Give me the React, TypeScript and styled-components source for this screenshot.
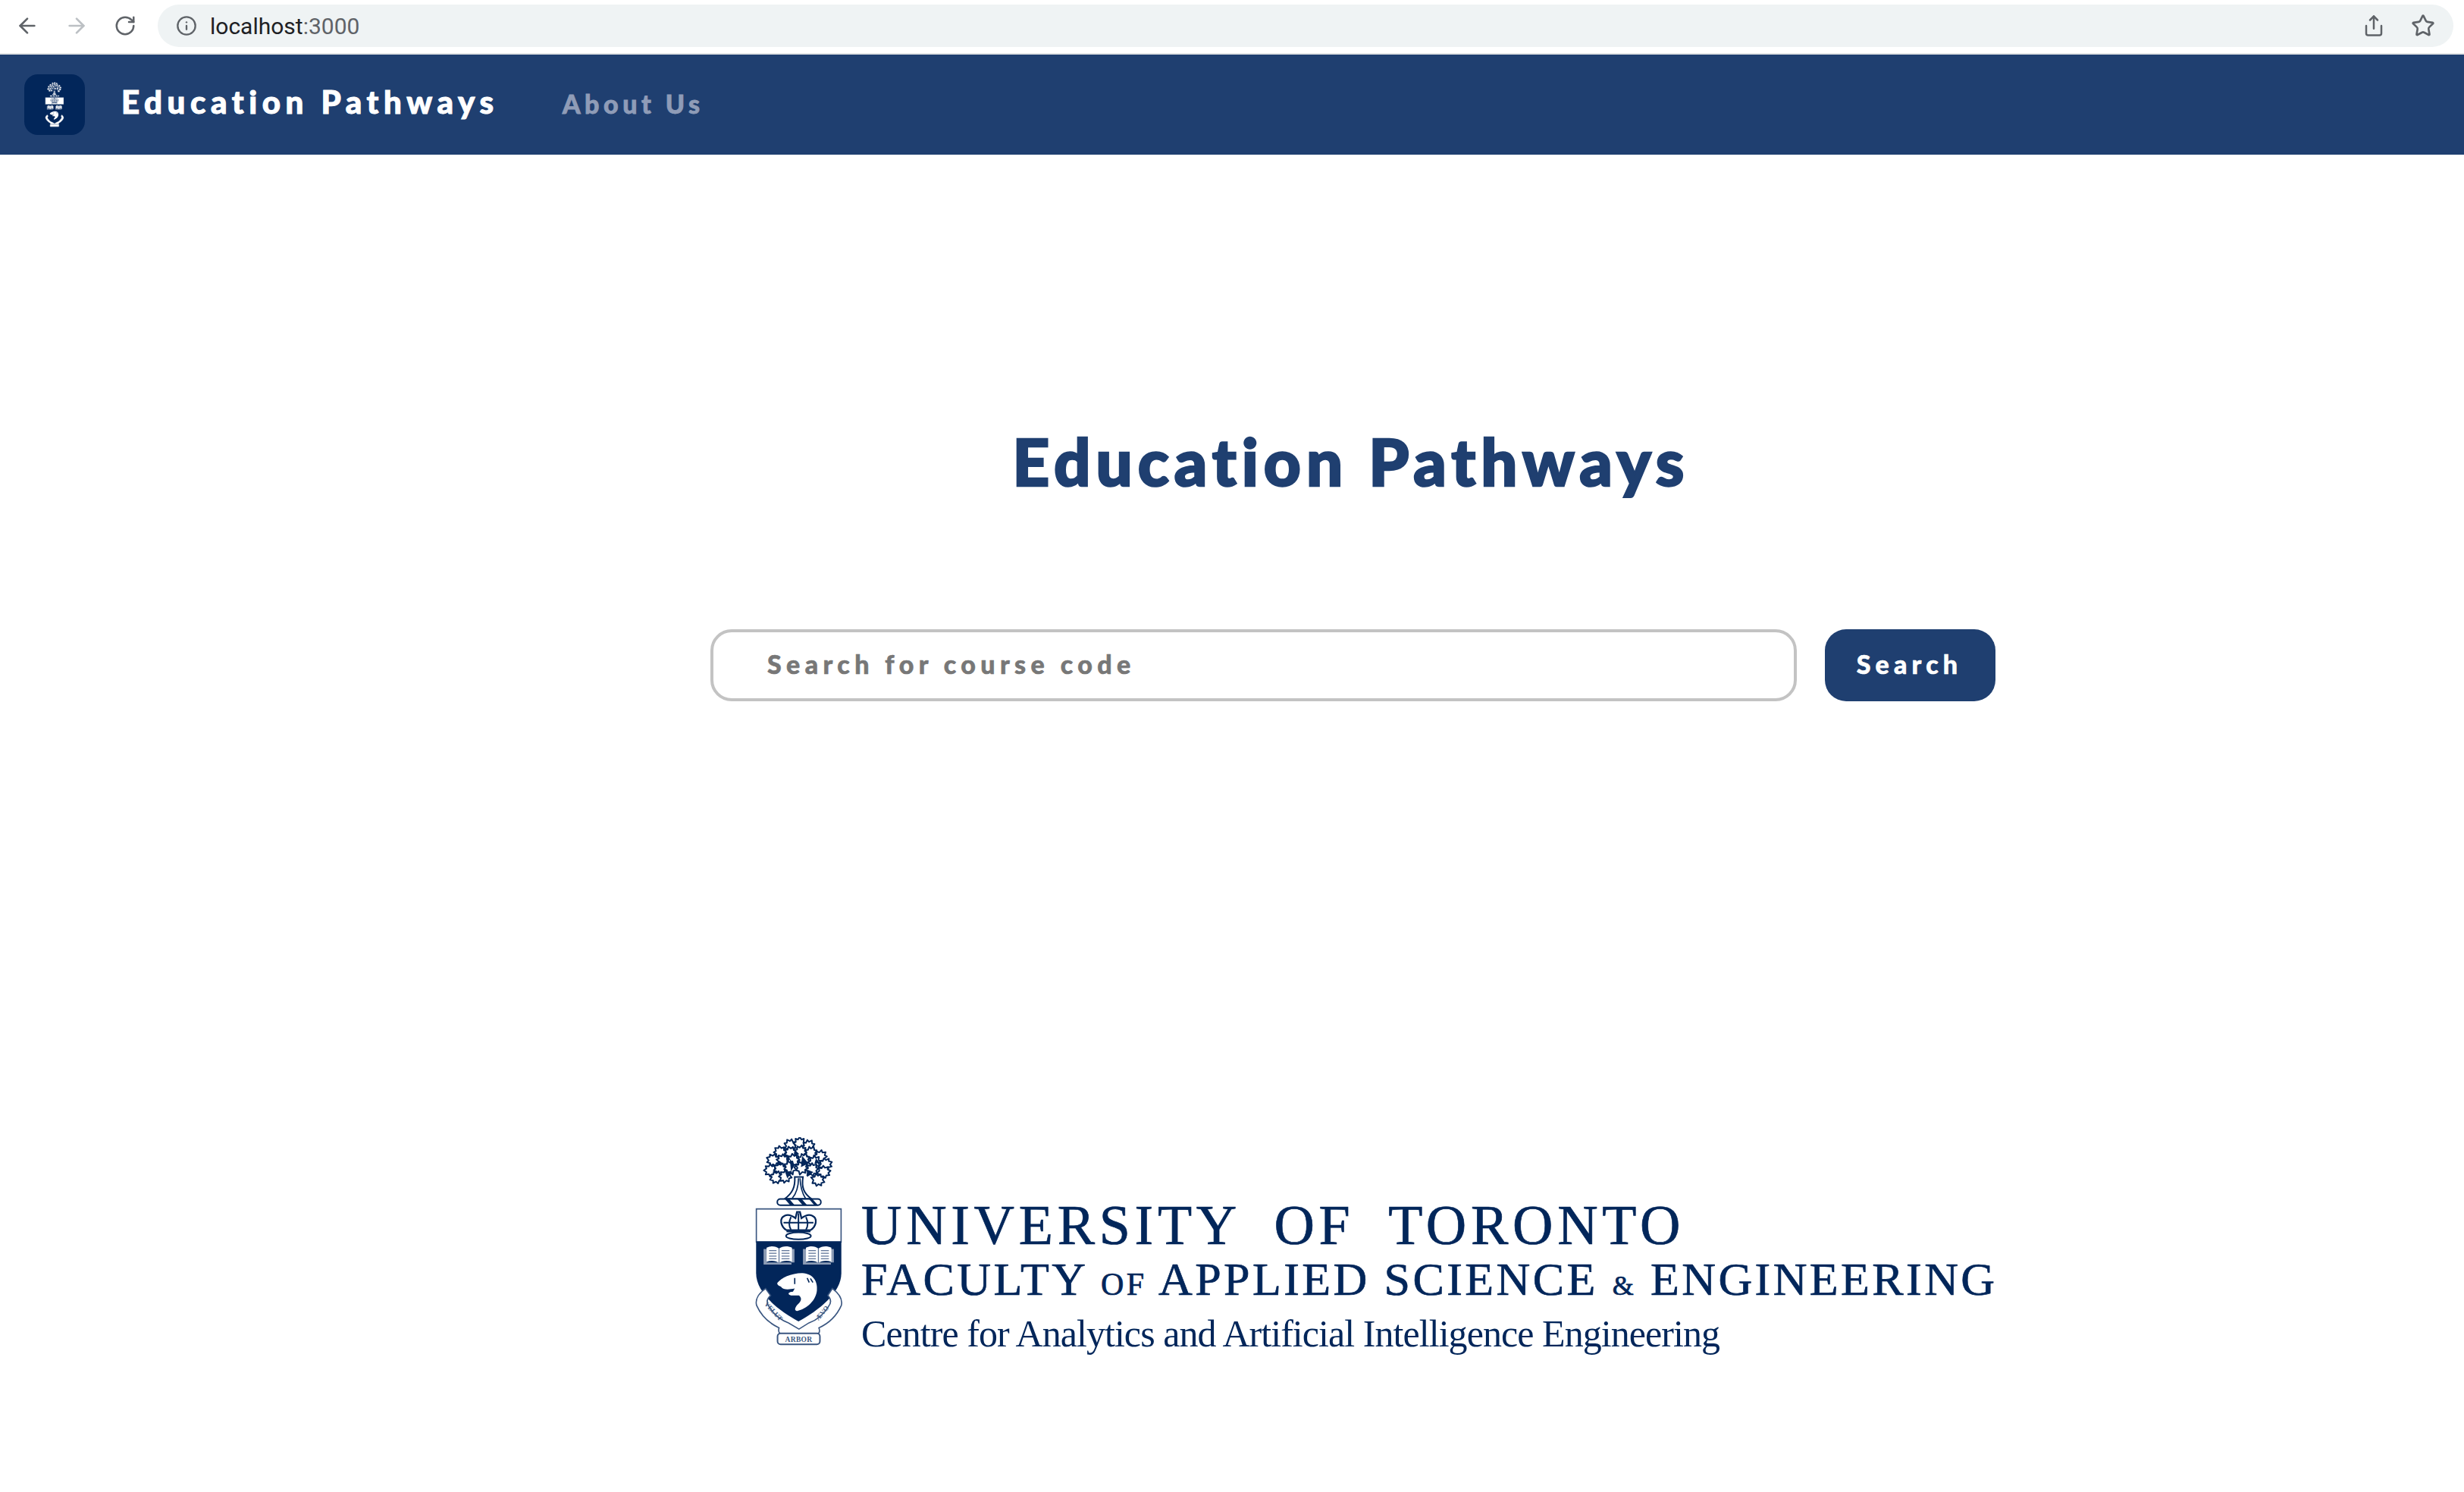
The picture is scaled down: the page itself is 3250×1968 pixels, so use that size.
import * as React from "react";
import styled, { createGlobalStyle } from "styled-components";
import { ArrowLeft, ArrowRight, Info, RotateCw, Share, Star } from "lucide-react";

const navy = "#1f3f70";
const ink = "#02265a";

const GlobalStyle = createGlobalStyle`
  html, body {
    margin: 0;
    padding: 0;
    background: #fff;
    font-family: "Lato", "Liberation Sans", sans-serif;
  }
`;

const Page = styled.div`
  width: 3250px;
  height: 1968px;
  display: flex;
  flex-direction: column;
  overflow: hidden;
  background: #fff;
`;

const BrowserBar = styled.div`
  height: 72px;
  flex: none;
  display: flex;
  align-items: center;
  padding: 0 14px 2px 20px;
  box-sizing: border-box;
  border-bottom: 2px solid #e2e4e6;
`;

const ToolIcon = styled.span<{ $muted?: boolean; $gap?: number }>`
  display: flex;
  margin-right: ${p => p.$gap ?? 33}px;
  color: ${p => (p.$muted ? "#bcc0c4" : "#5f6368")};
`;

const AddressBar = styled.div`
  flex: 1;
  height: 56px;
  border-radius: 28px;
  background: #eff3f4;
  display: flex;
  align-items: center;
  padding: 0 24px 0 24px;
`;

const Url = styled.span`
  flex: 1;
  margin-left: 17px;
  font-family: "Roboto", sans-serif;
  font-size: 30px;
  color: #202124;
`;

const UrlPort = styled.span`
  color: #5f6368;
`;

const Navbar = styled.nav`
  height: 132px;
  flex: none;
  display: flex;
  align-items: center;
  padding-left: 32px;
  background: ${navy};
`;

const LogoTile = styled.div`
  width: 80px;
  height: 80px;
  border-radius: 18px;
  background: ${ink};
  display: flex;
  align-items: center;
  justify-content: center;
  margin-right: 48px;
`;

const Brand = styled.a`
  font-size: 42px;
  font-weight: 900;
  letter-spacing: 6.6px;
  -webkit-text-stroke: 1px #fff;
  color: #fff;
  margin-right: 84px;
  position: relative;
  top: -4px;
`;

const NavLink = styled.a`
  font-size: 34px;
  font-weight: 900;
  letter-spacing: 5.5px;
  -webkit-text-stroke: 0.8px #8f9cb7;
  color: #8f9cb7;
  position: relative;
  top: -2px;
`;

const Main = styled.main`
  flex: 1;
  display: flex;
  flex-direction: column;
  padding-left: 937px;
`;

const Title = styled.h1`
  width: 1690px;
  margin: 352px 0 0;
  text-align: center;
  font-size: 85px;
  line-height: 104px;
  font-weight: 900;
  letter-spacing: 7px;
  -webkit-text-stroke: 2.5px ${navy};
  color: ${navy};
`;

const SearchRow = styled.form`
  display: flex;
  gap: 37px;
  margin-top: 170px;
`;

const SearchInput = styled.input`
  width: 1433px;
  height: 95px;
  box-sizing: border-box;
  border: 4px solid #c3c3c3;
  border-radius: 28px;
  padding: 0 0 4px 71px;
  background: #fff;
  outline: none;
  font-family: "Lato", sans-serif;
  font-size: 34px;
  font-weight: 900;
  letter-spacing: 6.4px;
  -webkit-text-stroke: 0.6px #777;
  color: #777;

  &::placeholder {
    color: #777;
    opacity: 1;
  }
`;

const SearchButton = styled.button`
  width: 225px;
  height: 95px;
  padding: 0 2px 4px 0;
  border: none;
  border-radius: 28px;
  background: ${navy};
  color: #fff;
  font-family: "Lato", sans-serif;
  font-size: 34px;
  font-weight: 900;
  letter-spacing: 6.2px;
  -webkit-text-stroke: 0.6px #fff;
`;

const Footer = styled.div`
  display: flex;
  align-items: flex-start;
  margin: 575px 0 0 57px;
`;

const FooterText = styled.div`
  display: flex;
  flex-direction: column;
  margin: 78px 0 0 22px;
  font-family: "Liberation Serif", serif;
  color: ${ink};
  white-space: nowrap;
`;

const FooterLine = styled.div<{ $size: number; $spacing: number; $height: number; $words?: number; $heavy?: boolean }>`
  font-size: ${p => p.$size}px;
  letter-spacing: ${p => p.$spacing}px;
  word-spacing: ${p => p.$words ?? 0}px;
  line-height: ${p => p.$height}px;
  -webkit-text-stroke: ${p => (p.$heavy ? `0.7px ${ink}` : "0")};
`;

const SmallWord = styled.span<{ $size: number }>`
  font-size: ${p => p.$size}px;
`;

// leaf clusters of the oak, in crest coordinates
const leaves: [number, number, number][] = [
  [190, 62, -30], [225, 55, 0], [258, 65, 30], [150, 88, -50], [190, 92, -20], [228, 88, 10],
  [268, 92, 25], [305, 105, 50], [122, 118, -70], [160, 122, -40], [200, 122, -10], [240, 120, 20],
  [282, 128, 40], [325, 135, 70], [112, 158, -90], [150, 155, -60], [188, 150, -20], [232, 150, 15],
  [272, 158, 40], [318, 165, 80], [135, 185, -110], [295, 195, 110], [170, 180, -130],
];

const Crest = ({ width, paper, text }: { width: number; paper: string; text: boolean }) => (
  <svg viewBox="40 25 365 840" width={width} height={(width * 840) / 365} style={{ flex: "none" }}>
    {/* tree */}
    {leaves.map(([x, y, r], i) => (
      <path
        key={i}
        transform={`translate(${x} ${y}) rotate(${r}) scale(1.2)`}
        d="M0-26 L6-17 L14-20 L13-9 L21-5 L13 2 L17 11 L6 11 L0 22 L-6 11 L-17 11 L-13 2 L-21-5 L-13-9 L-14-20 L-6-17Z"
        fill={paper}
        stroke={ink}
        strokeWidth="5"
        strokeLinejoin="round"
      />
    ))}
    <path d="M185 112l20 25-15 25zM235 100l25 30-30 15zM165 160l30 5-20 25zM255 155l25 10-25 20zM205 75l18 18-22 8zM140 118l18 12-20 10zM290 110l16 18-22 4z" fill={ink} />
    <path d="M205 185 C208 225 195 250 165 272 H272 C240 250 232 225 238 185 Z" fill={paper} stroke={ink} strokeWidth="6" />
    <path d="M220 190 C220 225 212 250 195 270 M226 190 C228 225 235 250 248 270" fill="none" stroke={ink} strokeWidth="5" />
    <rect x="135" y="273" width="175" height="25" rx="12" fill={paper} stroke={ink} strokeWidth="6" />
    <path d="M165 273l22 25h18l-22-25zM215 273l22 25h18l-22-25zM262 273l22 25h14l-22-25z" fill={ink} />

    {/* shield */}
    <path d="M51 313 H391 V445 H51 Z" fill={paper} stroke="#3a5680" strokeWidth="5" />
    <path d="M50 443 H392 V570 C392 650 300 720 220 764 C140 720 50 650 50 570 Z" fill={ink} />

    {/* crown */}
    <path
      d="M172 398 C150 385 140 350 165 340 C180 332 195 340 208 350 L214 325 H226 L232 350 C245 340 260 332 275 340 C300 350 290 385 268 398 Z"
      fill={paper}
      stroke={ink}
      strokeWidth="7"
    />
    <path d="M220 330 V396 M190 345 C180 365 182 385 190 396 M250 345 C260 365 258 385 250 396 M160 368 H280" stroke={ink} strokeWidth="6" fill="none" />
    <ellipse cx="220" cy="421" rx="50" ry="14" fill={paper} stroke={ink} strokeWidth="6" />
    <path d="M172 403 H268" stroke={ink} strokeWidth="7" />

    {/* books */}
    {[0, 158].map(dx => (
      <g key={dx} transform={`translate(${dx} 0)`}>
        <path d="M80 474 H92 V528 H204 V474 H192 V536 H80 Z" fill="#8d9cb5" />
        <path d="M92 468 C110 460 130 462 142 472 C154 462 176 460 194 468 V525 C176 518 154 520 142 530 C130 520 110 518 92 525 Z" fill={paper} />
        <path d="M142 472 V530 M102 480 H132 M102 491 H132 M102 502 H132 M102 513 H132 M152 480 H184 M152 491 H184 M152 502 H184 M152 513 H184" stroke="#5c7296" strokeWidth="4" />
      </g>
    ))}

    {/* beaver */}
    <path
      d="M135 610 C150 590 190 570 235 570 C280 572 298 605 294 640 C290 680 255 712 215 722 C202 722 205 708 218 695 C235 680 232 668 222 660 H190 C172 655 182 645 198 645 L205 632 C185 636 160 640 150 625 C142 622 134 618 135 610 Z"
      fill={paper}
    />
    <path d="M205 590v24M255 590l8 18M268 592l10 16" stroke={ink} strokeWidth="5" />

    {/* scrolls */}
    <path
      d="M88 632 C62 650 45 675 52 700 C72 745 110 775 142 790 C136 812 150 818 160 814 H285 C296 818 310 812 302 790 C335 775 372 745 392 700 C398 675 380 650 356 632 L338 660 C352 675 352 690 340 705 C320 738 290 760 262 770 L222 795 L180 770 C152 760 122 738 102 705 C92 690 90 675 108 660 Z"
      fill={paper}
      stroke="#3a5680"
      strokeWidth="5"
    />
    <rect x="136" y="812" width="170" height="44" rx="12" fill={paper} stroke="#3a5680" strokeWidth="6" />
    {text && (
      <g fontFamily="Liberation Serif, serif" fill="#3a5680" fontWeight="700">
        <text x="221" y="845" textAnchor="middle" fontSize="29" letterSpacing="1">ARBOR</text>
        <text transform="translate(82 696) rotate(47)" fontSize="27">VELUT</text>
        <text transform="translate(300 762) rotate(-50)" fontSize="27">ÆVO</text>
      </g>
    )}
  </svg>
);

export default function App() {
  return (
    <Page>
      <GlobalStyle />
      <BrowserBar>
        <ToolIcon><ArrowLeft size={32} strokeWidth={2} /></ToolIcon>
        <ToolIcon $muted><ArrowRight size={32} strokeWidth={2} /></ToolIcon>
        <ToolIcon $gap={28}><RotateCw size={30} strokeWidth={2} /></ToolIcon>
        <AddressBar>
          <ToolIcon $gap={0}><Info size={28} strokeWidth={2} /></ToolIcon>
          <Url>localhost<UrlPort>:3000</UrlPort></Url>
          <ToolIcon $gap={34}><Share size={30} strokeWidth={2} /></ToolIcon>
          <ToolIcon $gap={0}><Star size={32} strokeWidth={2} /></ToolIcon>
        </AddressBar>
      </BrowserBar>
      <Navbar>
        <LogoTile>
          <Crest width={26} paper="#ffffff" text={false} />
        </LogoTile>
        <Brand>Education Pathways</Brand>
        <NavLink>About Us</NavLink>
      </Navbar>
      <Main>
        <Title>Education Pathways</Title>
        <SearchRow>
          <SearchInput placeholder="Search for course code" />
          <SearchButton type="button">Search</SearchButton>
        </SearchRow>
        <Footer>
          <Crest width={120} paper="#ffffff" text />
          <FooterText>
            <FooterLine $heavy $size={74} $spacing={5.7} $height={76} $words={22}>UNIVERSITY OF TORONTO</FooterLine>
            <FooterLine $heavy $size={62} $spacing={3.4} $height={66}>
              FACULTY <SmallWord $size={42}>OF</SmallWord> APPLIED SCIENCE <SmallWord $size={36}>&amp;</SmallWord> ENGINEERING
            </FooterLine>
            <FooterLine $size={50} $spacing={-0.94} $height={60}>Centre for Analytics and Artificial Intelligence Engineering</FooterLine>
          </FooterText>
        </Footer>
      </Main>
    </Page>
  );
}
